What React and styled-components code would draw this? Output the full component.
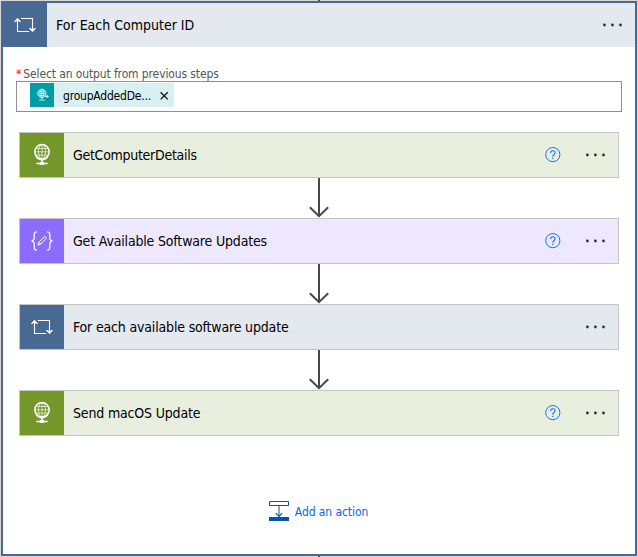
import React from "react";
import styled, { createGlobalStyle } from "styled-components";

const GlobalStyle = createGlobalStyle`
  * { box-sizing: border-box; }
  body {
    margin: 0;
    background: #d6d7d6;
    font-family: "DejaVu Sans Condensed", "DejaVu Sans", "Noto Sans", sans-serif;
    font-stretch: condensed;
    color: #000;
    overflow: hidden;
  }
`;

const Page = styled.div`
  height: 557px;
  width: 638px;
  padding: 1px;
  display: flex;
  flex-direction: column;
  align-items: center;
`;

const Scope = styled.section`
  width: 636px;
  height: 555px;
  flex: none;
  background: #fff;
  border: 2px solid #486991;
  display: flex;
  flex-direction: column;
`;

const Stub = styled.div`
  width: 2px;
  height: 1px;
  flex: none;
  background: #484848;
`;

const TopStub = styled(Stub)`
  margin-top: -1px;
`;

const ScopeHeader = styled.header`
  height: 44px;
  flex: none;
  display: flex;
  align-items: center;
  background: #e4e8ef;
  padding-right: 12px;
`;

const IconTile = styled.div`
  width: 44px;
  height: 44px;
  flex: none;
  display: flex;
  align-items: center;
  justify-content: center;
  background: ${(p) => p.$color};
`;

const Title = styled.div`
  flex: 1;
  padding-left: 9px;
  font-size: 14px;
  line-height: 20px;
  letter-spacing: ${(p) => p.$spacing || "0"};
  white-space: nowrap;
`;

const Field = styled.div`
  margin: 19px 13px 0;
  display: flex;
  flex-direction: column;
`;

const FieldLabel = styled.label`
  height: 15px;
  display: flex;
  gap: 2px;
  font-size: 12px;
  line-height: 17px;
  letter-spacing: -0.12px;
  color: #555;
  white-space: nowrap;
`;

const Required = styled.span`
  color: #e81123;
`;

const TokenInput = styled.div`
  height: 31px;
  border: 1px solid #8e8e8e;
  padding: 1px 13px;
  display: flex;
`;

const Token = styled.div`
  width: 144px;
  height: 24px;
  display: flex;
  align-items: center;
  background: #d8f0f2;
`;

const TokenIcon = styled.div`
  width: 24px;
  height: 24px;
  flex: none;
  display: flex;
  align-items: center;
  justify-content: center;
  background: #009da5;
`;

const TokenText = styled.span`
  width: 106px;
  flex: none;
  padding: 2px 0 0 9px;
  font-size: 12px;
  letter-spacing: -0.2px;
  white-space: nowrap;
`;

const Steps = styled.div`
  margin: 20px 16px 0;
  display: flex;
  flex-direction: column;
  align-items: center;
`;

const Card = styled.div`
  width: 600px;
  height: 46px;
  border: 1px solid #c5c5c5;
  background: ${(p) => p.$color};
  display: flex;
  align-items: center;
  padding-right: 12px;
`;

const Actions = styled.div`
  display: flex;
  align-items: center;
  gap: 23px;
`;

const Footer = styled.div`
  margin-top: 64px;
  padding-right: 1px;
  display: flex;
  justify-content: center;
  align-items: center;
  gap: 6px;
  height: 22px;
`;

const AddLink = styled.a`
  padding-top: 2px;
  color: #0b66ee;
  font-size: 12px;
  letter-spacing: -0.08px;
  white-space: nowrap;
`;

const Svg = styled.svg`
  display: block;
  flex: none;
  overflow: visible;
`;

const LoopIcon = () => (
  <Svg width="22" height="16" viewBox="0 0 22 16" fill="none" stroke="#fff" strokeWidth="1.1">
    <path d="M3.5 2V14.5H15.2M6.8 1.5H18.5V14" />
    <path d="M.4 4.6 3.5 1.3l3.1 3.3-3.1-1.2zM15.4 11.4l3.1 3.3 3.1-3.3-3.1 1.2z" fill="#fff" strokeWidth="1" />
  </Svg>
);

const GlobeIcon = () => (
  <Svg width="18" height="22" viewBox="0 0 18 22" fill="none" stroke="#fff">
    <circle cx="9" cy="7.8" r="7.2" strokeWidth="1.5" />
    <ellipse cx="9" cy="7.8" rx="3.5" ry="7" strokeWidth=".7" />
    <path d="M9 1v14M2.7 4.5h12.6M2 7.8h14M2.7 11.1h12.6" strokeWidth=".65" />
    <path d="M3.2 13.2c3 3.5 8.6 3.5 11.6 0" strokeWidth="1.2" />
    <path d="M9 15.5v4M3.3 19.5h11.4" strokeWidth="1.5" />
    <path d="M6.8 18.1h4.4v2.8H6.8z" fill="#fff" stroke="none" />
  </Svg>
);

const TokenGlobeIcon = () => (
  <Svg width="13" height="14" viewBox="0 0 13 14" fill="none" stroke="#e8ffff" strokeWidth=".75">
    <circle cx="5.9" cy="5.4" r="4.2" />
    <ellipse cx="5.9" cy="5.4" rx="1.9" ry="4.2" />
    <path d="M1.7 5.4h8.4M2.4 3.4h7M2.4 7.4h7M5.9 1.2v10.5M3 12.1h6" />
    <path d="M9.2 8.4h3M10.8 7l1.4 1.4-1.4 1.4" strokeWidth="1" />
  </Svg>
);

const ComposeIcon = () => (
  <Svg width="22" height="20" viewBox="0 0 22 20" fill="none" stroke="#fff" strokeWidth="1.2">
    <path d="M6.2 1H5.4Q3.2 1 3.2 3.2V7Q3.2 9.3.6 9.8 3.2 10.3 3.2 12.7v3.8Q3.2 19 5.4 19h.8" />
    <path d="M15.8 1h.8q2.2 0 2.2 2.2V7q0 2.3 2.6 2.8-2.6.5-2.6 2.9v3.8q0 2.5-2.2 2.5h-.8" />
    <path d="m7 14.2.8-3L13 6q.9-.8 1.8 0t0 1.8l-5.1 5.3zM7.9 11.3l1.8 1.8" strokeWidth=".95" />
  </Svg>
);

const HelpIcon = () => (
  <Svg width="16" height="16" viewBox="0 0 16 16" fill="none" stroke="#1673f3">
    <circle cx="7.8" cy="7.6" r="7.1" strokeWidth="1" />
    <path d="M5.6 6C5.6 3 10.1 3 10.1 5.7c0 1.8-2.3 1.9-2.3 4" strokeWidth="1.1" />
    <path d="M7.2 10.7h1.2v1.2H7.2z" fill="#1673f3" stroke="none" />
  </Svg>
);

const MoreIcon = () => (
  <Svg width="22" height="4" viewBox="0 0 22 4" fill="#303030">
    <circle cx="3.4" cy="2" r="1.4" />
    <circle cx="11.4" cy="2" r="1.4" />
    <circle cx="19.5" cy="2" r="1.4" />
  </Svg>
);

const CloseIcon = () => (
  <Svg width="9" height="9" viewBox="0 0 9 9" fill="none" stroke="#111" strokeWidth="1.3">
    <path d="m.6 1.2 7.2 7.2M7.8 1.2.6 8.4" />
  </Svg>
);

const Connector = () => (
  <Svg width="20" height="40" viewBox="0 0 20 40" fill="none" stroke="#484848" strokeWidth="2">
    <path d="M10 0v38M.8 29.2l9.2 9 9.2-9" />
  </Svg>
);

const InsertIcon = () => (
  <Svg width="20" height="20" viewBox="0 0 20 20" fill="none" stroke="#0055ad">
    <path d="M.5.5h19v4H.5zM10 5v10.5" />
    <path d="m6.8 12.2 3.2 3.2 3.2-3.2" strokeWidth="1.1" />
    <path d="M0 16h20v4H0z" fill="#0055ad" stroke="none" />
  </Svg>
);

const steps = [
  { title: "GetComputerDetails", spacing: "-0.28px", tile: "#739729", color: "#e9efdf", Icon: GlobeIcon, help: true },
  { title: "Get Available Software Updates", spacing: "-0.17px", tile: "#8c6cff", color: "#eee8ff", Icon: ComposeIcon, help: true },
  { title: "For each available software update", spacing: "-0.17px", tile: "#486991", color: "#e4e8ef", Icon: LoopIcon, help: false },
  { title: "Send macOS Update", spacing: "-0.17px", tile: "#739729", color: "#e9efdf", Icon: GlobeIcon, help: true },
];

export default function App() {
  return (
    <>
      <GlobalStyle />
      <Page>
        <TopStub />
        <Scope>
          <ScopeHeader>
            <IconTile $color="#486991"><LoopIcon /></IconTile>
            <Title>For Each Computer ID</Title>
            <MoreIcon />
          </ScopeHeader>
          <Field>
            <FieldLabel><Required>*</Required>Select an output from previous steps</FieldLabel>
            <TokenInput>
              <Token>
                <TokenIcon><TokenGlobeIcon /></TokenIcon>
                <TokenText>groupAddedDe...</TokenText>
                <CloseIcon />
              </Token>
            </TokenInput>
          </Field>
          <Steps>
            {steps.map(({ title, spacing, tile, color, Icon, help }, i) => (
              <React.Fragment key={title}>
                {i > 0 && <Connector />}
                <Card $color={color}>
                  <IconTile $color={tile}><Icon /></IconTile>
                  <Title $spacing={spacing}>{title}</Title>
                  <Actions>
                    {help && <HelpIcon />}
                    <MoreIcon />
                  </Actions>
                </Card>
              </React.Fragment>
            ))}
          </Steps>
          <Footer>
            <InsertIcon />
            <AddLink>Add an action</AddLink>
          </Footer>
        </Scope>
        <Stub />
      </Page>
    </>
  );
}
